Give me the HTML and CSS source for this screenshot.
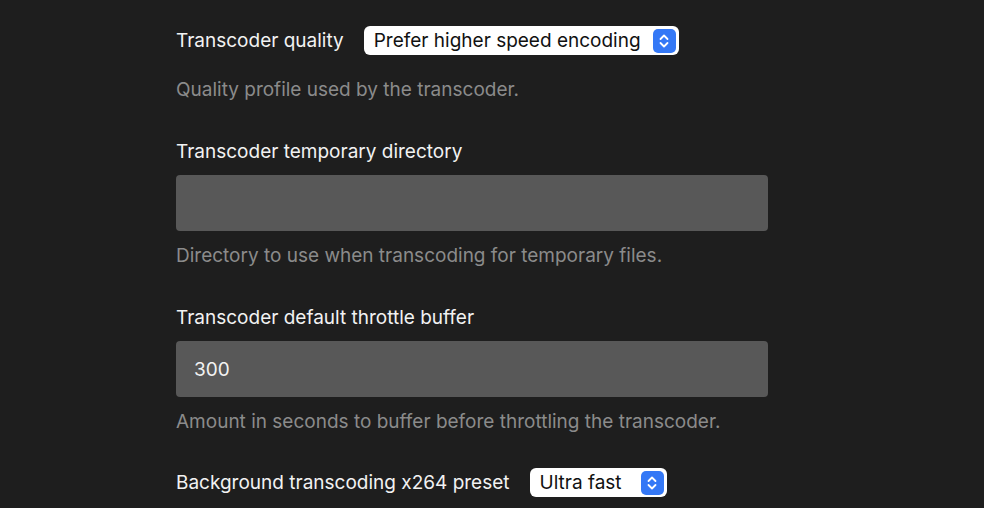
FILE: index.html
```html
<!DOCTYPE html>
<html>
<head>
<meta charset="utf-8">
<link rel="stylesheet" href="styles.css">
</head>
<body>
<div class="settings">
  <div class="inline-row first">
    <span class="label">Transcoder quality</span>
    <div class="select wide">
      <span class="select-text">Prefer higher speed encoding</span>
      <span class="stepper"><svg width="12" height="16" viewBox="0 0 12 16"><path d="M2.5 6 L6 2.5 L9.5 6 M2.5 10 L6 13.5 L9.5 10" fill="none" stroke="#fff" stroke-width="1.8" stroke-linecap="round" stroke-linejoin="round"/></svg></span>
    </div>
  </div>
  <p class="desc">Quality profile used by the transcoder.</p>

  <div class="field">
    <span class="label">Transcoder temporary directory</span>
    <div class="input"></div>
  </div>
  <p class="desc">Directory to use when transcoding for temporary files.</p>

  <div class="field">
    <span class="label">Transcoder default throttle buffer</span>
    <div class="input">300</div>
  </div>
  <p class="desc">Amount in seconds to buffer before throttling the transcoder.</p>

  <div class="inline-row last">
    <span class="label">Background transcoding x264 preset</span>
    <div class="select narrow">
      <span class="select-text">Ultra fast</span>
      <span class="stepper"><svg width="12" height="16" viewBox="0 0 12 16"><path d="M2.5 6 L6 2.5 L9.5 6 M2.5 10 L6 13.5 L9.5 10" fill="none" stroke="#fff" stroke-width="1.8" stroke-linecap="round" stroke-linejoin="round"/></svg></span>
    </div>
  </div>
</div>
</body>
</html>
```
FILE: styles.css
```css
html, body {
  margin: 0;
  padding: 0;
  background: #1e1e1e;
  height: 100%;
  overflow: hidden;
}
body {
  font-family: Inter, "Noto Sans", "Liberation Sans", sans-serif;
  font-size: 19px;
  line-height: 24px;
  color: #f2f2f2;
}
.settings {
  padding-left: 176px;
  width: 592px;
}
.label {
  display: block;
  white-space: nowrap;
  padding-top: 1px;
}
.inline-row {
  display: flex;
  align-items: center;
  gap: 20px;
  height: 29px;
}
.inline-row.first { margin-top: 26px; }
.inline-row.last { margin-top: 34px; }
.select {
  box-sizing: border-box;
  height: 29px;
  background: #ffffff;
  border-radius: 6px;
  display: flex;
  align-items: center;
  justify-content: space-between;
  padding: 1px 3px 0 10px;
  color: #111;
}
.select.wide { width: 315px; }
.select.narrow { width: 137px; }
.select-text { white-space: nowrap; }
.stepper {
  width: 23px;
  height: 24px;
  margin-top: -1px;
  border-radius: 5px;
  background: #3478f6;
  display: flex;
  align-items: center;
  justify-content: center;
}
.desc {
  margin: 22px 0 0;
  padding-top: 1px;
  color: #8b8b8b;
  white-space: nowrap;
}
.desc + .field { margin-top: 37px; }
.field .input { margin-top: 11px; }
.field + .desc { margin-top: 12px; }
.input {
  box-sizing: border-box;
  height: 56px;
  background: #585858;
  border-radius: 4px;
  padding: 2px 18px 0;
  display: flex;
  align-items: center;
  color: #f2f2f2;
}
```
